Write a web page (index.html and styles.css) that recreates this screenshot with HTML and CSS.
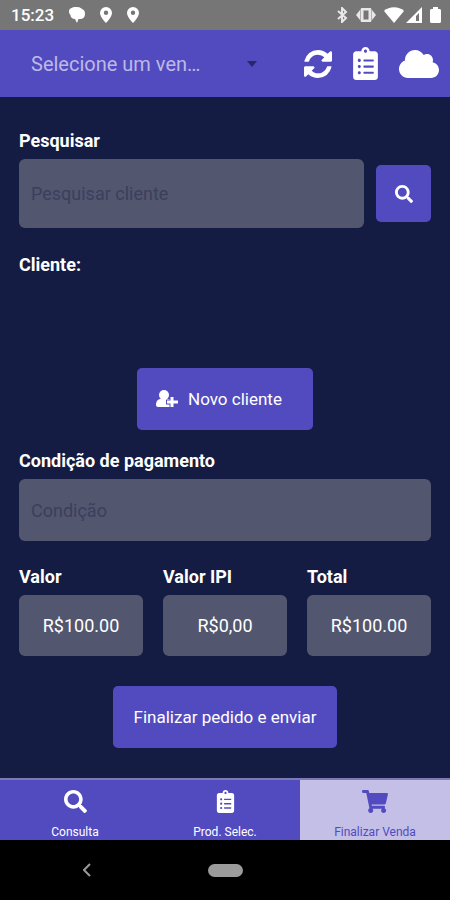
FILE: index.html
```html
<!DOCTYPE html>
<html lang="pt-BR">
<head>
    <meta charset="UTF-8">
    <meta name="viewport" content="width=device-width, initial-scale=1">
    <title>Finalizar Venda</title>
    <link rel="stylesheet" href="styles.css">
</head>
<body>
    <!-- Icons used more than once -->
    <svg class="sprite" aria-hidden="true">
        <symbol id="i-search" viewBox="0 0 512 512">
            <path d="M505 442.7L405.3 343c-4.5-4.5-10.6-7-17-7H372c27.6-35.3 44-79.7 44-128C416 93.1 322.9 0 208 0S0 93.1 0 208s93.1 208 208 208c48.3 0 92.7-16.4 128-44v16.3c0 6.4 2.5 12.5 7 17l99.7 99.7c9.4 9.4 24.6 9.4 33.9 0l28.3-28.3c9.4-9.4 9.4-24.6.1-34zM208 336c-70.7 0-128-57.2-128-128 0-70.7 57.2-128 128-128 70.7 0 128 57.2 128 128 0 70.7-57.2 128-128 128z"/>
        </symbol>
        <symbol id="i-list" viewBox="0 0 384 512">
            <path d="M336 64h-80c0-35.3-28.7-64-64-64s-64 28.7-64 64H48C21.5 64 0 85.5 0 112v352c0 26.5 21.5 48 48 48h288c26.5 0 48-21.5 48-48V112c0-26.5-21.5-48-48-48zM96 424c-13.3 0-24-10.7-24-24s10.7-24 24-24 24 10.7 24 24-10.7 24-24 24zm0-96c-13.3 0-24-10.7-24-24s10.7-24 24-24 24 10.7 24 24-10.7 24-24 24zm0-96c-13.3 0-24-10.7-24-24s10.7-24 24-24 24 10.7 24 24-10.7 24-24 24zm96-192c13.3 0 24 10.7 24 24s-10.7 24-24 24-24-10.7-24-24 10.7-24 24-24zm128 368c0 4.4-3.6 8-8 8H168c-4.4 0-8-3.6-8-8v-16c0-4.4 3.6-8 8-8h144c4.4 0 8 3.6 8 8v16zm0-96c0 4.4-3.6 8-8 8H168c-4.4 0-8-3.6-8-8v-16c0-4.4 3.6-8 8-8h144c4.4 0 8 3.6 8 8v16zm0-96c0 4.4-3.6 8-8 8H168c-4.4 0-8-3.6-8-8v-16c0-4.4 3.6-8 8-8h144c4.4 0 8 3.6 8 8v16z"/>
        </symbol>
        <symbol id="i-pin" viewBox="0 0 12 16">
            <path fill-rule="evenodd" d="M6 0a6 6 0 0 0-6 6c0 4 6 10 6 10s6-6 6-10a6 6 0 0 0-6-6zm0 3.600a2.200 2.200 0 1 1 0 4.400 2.200 2.200 0 0 1 0-4.400z"/>
        </symbol>
    </svg>

    <div class="status-bar">
        <div class="status-left">
            <span class="clock">15:23</span>
            <svg width="16" height="16" viewBox="0 0 16 16"><path d="M7 0c4 0 5 1 6 2 2 1 3 2 3 5s-2 5-5 5H9.500L8 16l-2-4C3 12 1.500 10 1.500 8 0 7 0 5 0 4c0-2 3-4 7-4z"/></svg>
            <svg width="12" height="16"><use href="#i-pin"/></svg>
            <svg width="12" height="16"><use href="#i-pin"/></svg>
        </div>
        <div class="status-right">
            <svg class="bluetooth" width="12" height="16" viewBox="0 0 12 16"><path d="M2 4l8 7-4 4V1l4 4-8 7"/></svg>
            <svg class="vibrate" width="20" height="14" viewBox="0 0 20 14"><rect x="6" y="1" width="8" height="12" rx="1" fill="none" stroke="#e8e8e8" stroke-width="3"/><path d="M4 2v10L0 7zM16 2v10l4-5z"/></svg>
            <div class="signal">
                <svg width="20" height="16" viewBox="0 0 20 16"><path d="M0 4c5-5 15-5 20 0L10 16z"/></svg>
                <svg width="16" height="16" viewBox="0 0 16 16"><path fill-rule="evenodd" d="M16 0v16H0zM13 6l-3 3v5h3z"/></svg>
            </div>
            <svg width="11" height="16" viewBox="0 0 11 16"><path d="M3 0h5v2h2l1 1v12l-1 1H1l-1-1V3l1-1h2z"/></svg>
        </div>
    </div>

    <header class="header">
        <div class="seller">
            <select class="seller-select" aria-label="Vendedor">
                <option>Selecione um ven…</option>
            </select>
            <svg class="arrow" width="10" height="6" viewBox="0 0 10 6"><path d="M0 0h10L5 6z"/></svg>
        </div>
        <button class="icon-btn" type="button" aria-label="Sincronizar">
            <svg width="28" height="28" viewBox="0 128 1536 1536"><path d="M1511 1056q0 5-1 7-64 268-268 434.500t-478 166.500q-146 0-282.500-55t-243.500-157l-129 129q-19 19-45 19t-45-19-19-45v-448q0-26 19-45t45-19h448q26 0 45 19t19 45-19 45l-137 137q71 66 161 102t187 36q134 0 250-65t186-179q11-17 53-117 8-23 30-23h192q13 0 22.500 9.500t9.500 22.500zm25-800v448q0 26-19 45t-45 19h-448q-26 0-45-19t-19-45 19-45l138-138q-148-137-349-137-134 0-250 65t-186 179q-11 17-53 117-8 23-30 23h-199q-13 0-22.500-9.500t-9.500-22.500v-7q65-268 270-434.500t480-166.500q146 0 284 55.500t245 156.500l130-129q19-19 45-19t45 19 19 45z"/></svg>
        </button>
        <button class="icon-btn" type="button" aria-label="Pedidos">
            <svg width="25" height="33"><use href="#i-list"/></svg>
        </button>
        <button class="icon-btn" type="button" aria-label="Nuvem">
            <svg width="40" height="32" viewBox="0 0 640 512"><path d="M537.600 226.600c4.100-10.700 6.400-22.400 6.400-34.600 0-53-43-96-96-96-19.700 0-38.100 6-53.300 16.200C367 64.200 315.300 32 256 32c-88.400 0-160 71.600-160 160 0 2.700.1 5.400.2 8.100C40.200 219.800 0 273.200 0 336c0 79.500 64.500 144 144 144h368c70.700 0 128-57.300 128-128 0-61.900-44-113.600-102.400-125.400z"/></svg>
        </button>
    </header>

    <main class="content">
        <label class="label" for="search">Pesquisar</label>
        <div class="search-row">
            <input class="field search-field" type="text" id="search" placeholder="Pesquisar cliente">
            <button class="btn search-btn" type="button" aria-label="Pesquisar cliente">
                <svg width="18" height="18"><use href="#i-search"/></svg>
            </button>
        </div>

        <div class="client">
            <h2 class="label">Cliente:</h2>
        </div>

        <button class="btn new-client" type="button">
            <svg width="22" height="18" viewBox="0 0 22 18">
                <circle cx="8" cy="5" r="5"/>
                <path d="M0 15c0-4 2-6 5-6h7c3 0 4 2 4 4v4H2c-1 0-2-1-2-2z"/>
                <path class="plus-edge" d="M16 6v12M10 12h12"/>
                <path class="plus" d="M16 7v10M11 12h11"/>
            </svg>
            Novo cliente
        </button>

        <label class="label" for="payment">Condição de pagamento</label>
        <input class="field" type="text" id="payment" placeholder="Condição">

        <div class="totals">
            <div class="total">
                <label class="label" for="value">Valor</label>
                <input class="field amount" type="text" id="value" value="R$100.00" readonly>
            </div>
            <div class="total">
                <label class="label" for="ipi">Valor IPI</label>
                <input class="field amount" type="text" id="ipi" value="R$0,00" readonly>
            </div>
            <div class="total">
                <label class="label" for="sum">Total</label>
                <input class="field amount" type="text" id="sum" value="R$100.00" readonly>
            </div>
        </div>

        <button class="btn finish" type="button">Finalizar pedido e enviar</button>
    </main>

    <nav class="tabs">
        <a class="tab" href="#consulta">
            <svg width="23" height="23"><use href="#i-search"/></svg>
            Consulta
        </a>
        <a class="tab" href="#produtos">
            <svg width="23" height="23"><use href="#i-list"/></svg>
            Prod. Selec.
        </a>
        <a class="tab active" href="#finalizar">
            <svg width="26" height="23" viewBox="0 0 576 512"><path d="M528.120 301.319l47.273-208C578.806 78.301 567.391 64 551.990 64H159.208l-9.166-44.810C147.758 8.021 137.930 0 126.529 0H24C10.745 0 0 10.745 0 24v16c0 13.255 10.745 24 24 24h69.883l70.248 343.435C147.325 417.100 136 435.222 136 456c0 30.928 25.072 56 56 56s56-25.072 56-56c0-15.674-6.447-29.835-16.824-40h209.647C430.447 426.165 424 440.326 424 456c0 30.928 25.072 56 56 56s56-25.072 56-56c0-22.172-12.888-41.332-31.579-50.405l5.517-24.276c3.413-15.018-8.002-29.319-23.403-29.319H218.117l-6.545-32h293.145c11.206 0 20.920-7.754 23.403-18.681z"/></svg>
            Finalizar Venda
        </a>
    </nav>

    <div class="system-nav">
        <button class="back" type="button" aria-label="Voltar">
            <svg width="8" height="14" viewBox="0 0 8 14"><path d="M7 1L1 7l6 6"/></svg>
        </button>
        <button class="home" type="button" aria-label="Início"></button>
        <span></span>
    </div>
</body>
</html>
```
FILE: styles.css
```css
* {
    box-sizing: border-box;
}
body {
    display: flex;
    flex-direction: column;
    min-height: 100vh;
    margin: 0;
    background: #151c43;
    color: #fff;
    font-family: Roboto, sans-serif;
    font-size: 18px;
}
button, input, select {
    font: inherit;
    color: inherit;
    border: none;
    padding: 0;
}
button {
    background: none;
    cursor: pointer;
}
svg {
    display: block;
    fill: #fff;
}
.sprite {
    position: absolute;
    width: 0;
    height: 0;
}

/* Status bar */
.status-bar {
    display: flex;
    justify-content: space-between;
    align-items: center;
    height: 30px;
    padding: 0 9px 0 11px;
    background: #767676;
}
.status-left, .status-right {
    display: flex;
    align-items: center;
}
.status-left {
    gap: 15px;
}
.status-right {
    gap: 8px;
}
.clock {
    font-size: 17px;
    font-weight: 500;
}
.bluetooth {
    fill: none;
    stroke: #e8e8e8;
    stroke-width: 2;
}
.vibrate {
    fill: #e8e8e8;
}
.signal {
    display: flex;
    gap: 2px;
}

/* Header */
.header {
    display: flex;
    align-items: center;
    gap: 21px;
    height: 67px;
    padding: 0 11px 0 31px;
    background: #524bc0;
}
.seller {
    display: grid;
    flex: 1;
    align-items: center;
    min-width: 0;
    margin-right: 26px;
}
.seller-select, .arrow {
    grid-area: 1 / 1;
}
.seller-select {
    width: 100%;
    height: 48px;
    appearance: none;
    background: none;
    color: #bdb9e6;
    font-size: 20px;
}
.seller-select option {
    color: #151c43;
}
.arrow {
    justify-self: end;
    fill: #2a2768;
    pointer-events: none;
}

/* Form */
.content {
    display: flex;
    flex-direction: column;
    flex: 1;
    padding: 32px 19px 30px;
}
.label {
    display: block;
    margin: 0 0 6px;
    font-size: 18px;
    font-weight: 700;
    line-height: 24px;
}
.field {
    width: 100%;
    height: 62px;
    padding: 0 12px;
    border-radius: 6px;
    background: #52566f;
}
.field::placeholder {
    color: #3c3f5c;
    opacity: 1;
}
.search-row {
    display: flex;
    align-items: center;
    gap: 12px;
}
.search-field {
    flex: 1;
    min-width: 0;
    height: 69px;
}
.btn {
    display: flex;
    justify-content: center;
    align-items: center;
    height: 62px;
    border-radius: 5px;
    background: #524bc0;
    font-size: 17px;
}
.search-btn {
    width: 55px;
    height: 57px;
}
.client {
    min-height: 115px;
    margin-top: 25px;
}
.new-client {
    gap: 10px;
    align-self: center;
    margin-bottom: 19px;
    padding: 0 31px 0 19px;
}
.plus-edge {
    stroke: #524bc0;
    stroke-width: 5;
}
.plus {
    stroke: #fff;
    stroke-width: 3;
}
.totals {
    display: grid;
    grid-template-columns: repeat(3, 1fr);
    gap: 20px;
    margin: 24px 0 30px;
}
.amount {
    display: block;
    height: 61px;
    text-align: center;
}
.finish {
    align-self: center;
    padding: 0 21px;
}

/* Bottom tabs */
.tabs {
    display: grid;
    grid-template-columns: repeat(3, 1fr);
    height: 62px;
    border-top: 2px solid #7c7bb4;
    background: #524bc0;
}
.tab {
    display: flex;
    flex-direction: column;
    align-items: center;
    gap: 11px;
    padding-top: 10px;
    color: #fff;
    font-size: 12px;
    line-height: 16px;
    text-decoration: none;
}
.tab.active {
    background: #c3bfe6;
    color: #524bc0;
}
.tab.active svg {
    fill: #524bc0;
}

/* Android navigation */
.system-nav {
    display: flex;
    justify-content: space-between;
    align-items: center;
    height: 60px;
    padding: 0 83px;
    background: #000;
}
.system-nav span {
    width: 8px;
}
.back svg {
    fill: none;
    stroke: #999;
    stroke-width: 2;
}
.home {
    width: 35px;
    height: 13px;
    border-radius: 7px;
    background: #9b9b9b;
}
```
